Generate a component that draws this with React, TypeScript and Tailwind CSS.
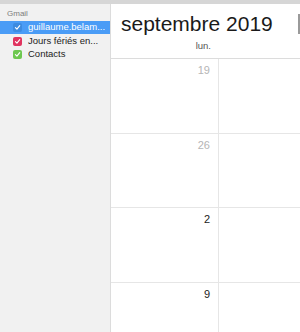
import React from "react";

function Check({ color }: { color: string }) {
  return (
    <span
      className="flex h-[9px] w-[9px] items-center justify-center rounded-[2px]"
      style={{ background: color }}
    >
      <svg width="7" height="7" viewBox="0 0 10 10">
        <path d="M2 5.2 L4.2 7.4 L8.2 2.4" fill="none" stroke="white" strokeWidth="1.6" strokeLinecap="round" strokeLinejoin="round" />
      </svg>
    </span>
  );
}

export default function App() {
  const rows = [
    { n: "19", muted: true },
    { n: "26", muted: true },
    { n: "2", muted: false },
    { n: "9", muted: false },
  ];
  return (
    <div
      className="flex h-[332px] w-[300px] flex-col overflow-hidden bg-white"
      style={{ fontFamily: '"Liberation Sans", Arial, sans-serif' }}
    >
      <div className="h-[4px] w-full shrink-0 bg-[#d6d6d6]" />
      <div className="flex min-h-0 flex-1">
        <div className="flex w-[111px] shrink-0 flex-col border-r border-[#dcdcdc] bg-[#f1f1f1]">
          <div className="pl-[7px] pt-[4px] text-[8px] leading-[12px] text-[#7c7c7c]">Gmail</div>
          <div className="mt-[1px] flex h-[13px] items-center gap-[6px] bg-[#4a9cf6] pl-[13px] text-[9.5px] text-white">
            <span className="flex h-[9px] w-[9px] items-center justify-center rounded-[2px] bg-[#3d8be0]">
              <svg width="7" height="7" viewBox="0 0 10 10">
                <path d="M2 5.2 L4.2 7.4 L8.2 2.4" fill="none" stroke="white" strokeWidth="1.6" strokeLinecap="round" strokeLinejoin="round" />
              </svg>
            </span>
            <span className="truncate">guillaume.belam...</span>
          </div>
          <div className="mt-[1px] flex h-[13px] items-center gap-[6px] pl-[13px] text-[9.5px] text-[#222]">
            <Check color="#e0335f" />
            <span className="truncate">Jours fériés en...</span>
          </div>
          <div className="flex h-[13px] items-center gap-[6px] pl-[13px] text-[9.5px] text-[#222]">
            <Check color="#6ec850" />
            <span className="truncate">Contacts</span>
          </div>
        </div>
        <div className="relative flex min-w-0 flex-1 flex-col overflow-hidden">
          <div className="h-[31px] shrink-0 pl-[10px] pt-[8px] text-[21px] leading-[23px] text-[#1a1a1a]">
            septembre 2019
          </div>
          <div className="flex h-[23px] shrink-0 items-center">
            <div className="w-[108px] pr-[8px] text-right text-[9.5px] text-[#555]">lun.</div>
          </div>
          <div className="flex shrink-0 flex-col border-t border-[#dcdcdc]">
            {rows.map((r, i) => (
              <div key={i} className="flex h-[74.5px] shrink-0 border-b border-[#e6e6e6]">
                <div className="w-[108px] border-r border-[#e6e6e6] pr-[8px] pt-[4px] text-right text-[11px] leading-[14px]">
                  <span className={r.muted ? "text-[#b5b5b5]" : "text-[#222]"}>{r.n}</span>
                </div>
                <div className="flex-1" />
              </div>
            ))}
          </div>
          <div className="absolute right-0 top-[10px] h-[20px] w-[2px] bg-[#9a9a9a]" />
        </div>
      </div>
    </div>
  );
}
